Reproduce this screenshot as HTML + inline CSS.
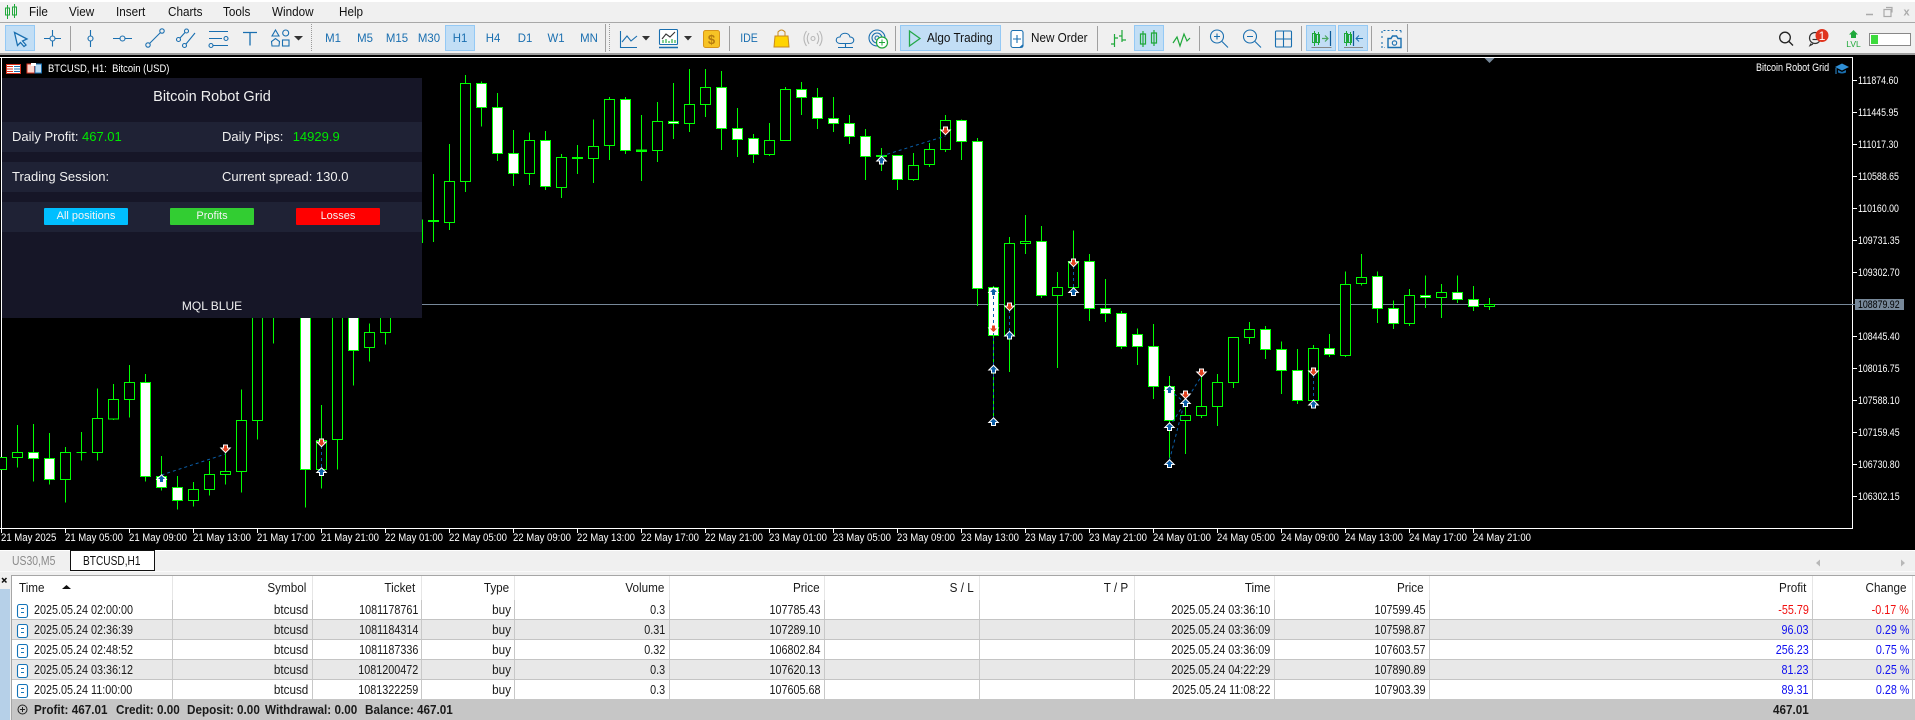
<!DOCTYPE html>
<html><head><meta charset="utf-8"><title>BTCUSD,H1</title>
<style>
html,body{margin:0;padding:0;width:1915px;height:720px;overflow:hidden;background:#f0f0f0}
body{position:relative;font-family:"Liberation Sans",sans-serif;color:#1a1a1a}
svg{position:absolute;left:0;top:0;display:block}
.a{position:absolute}
.t,.n,.rt,.rn,.m,.c,.x,.p{position:absolute;white-space:pre;line-height:20px;font-size:13px}
.t{transform:scaleX(.9);transform-origin:0 50%}
.n{transform:scaleX(.83);transform-origin:0 50%}
.rt{transform:scaleX(.9);transform-origin:100% 50%}
.rn{transform:scaleX(.83);transform-origin:100% 50%}
.m{top:2px;transform:scaleX(.9);transform-origin:0 50%;color:#111}
.c{top:28px;font-size:12px;color:#1a6fb0;transform:translateX(-50%) scaleX(.95)}
.x{font-size:11px;color:#fff;top:527.5px;transform:scaleX(.87);transform-origin:0 50%}
.p{font-size:11px;color:#fff;left:1858px;transform:scaleX(.8);transform-origin:0 50%}
.row{position:absolute;left:0;width:1915px;height:20px;background:#fff}
.row.g{background:#e8e8e8}
.bl{color:#1010f0}.rd{color:#f01010}
.band{position:absolute;left:2px;width:420px;height:30px;background:#1f2235}
.pt{position:absolute;white-space:pre;font-size:13px;line-height:20px;color:#f0f0f0}
.gr{color:#00e800}
.btn{position:absolute;top:208px;width:84px;height:17px;line-height:17px;text-align:center;font-size:11px;color:#f4f4f4;border-radius:1px}
b{font-weight:bold}
.mk{paint-order:stroke;stroke:#fff;stroke-width:2;stroke-linejoin:miter}
</style></head>
<body>

<!-- CHART -->
<svg width="1915" height="552" style="top:0">
<defs>
<g id="u"><path class="mk" d="M0-3.500 3.500 0H1.500V3H-1.500V0H-3.500Z" fill="#0b5ea8"/></g>
<g id="d"><path class="mk" d="M0 3.500 3.500 0H1.500V-3H-1.500V0H-3.500Z" fill="#e2411f"/></g>
</defs>
<rect x="0" y="54" width="1915" height="497" fill="#000"/>
<rect x="0" y="53" width="1915" height="2" fill="#a0a0a0"/>
<path d="M1.500 57V529M0 57.500H1852.500M1852.500 57V529M0 528.500H1853M0 550.500H1915" stroke="#fff" fill="none" shape-rendering="crispEdges"/>
<path d="M2 304.500H1855" stroke="#778899" shape-rendering="crispEdges"/>
<path d="M1484.500 58h10l-5 5z" fill="#778899"/>
<path d="M1853 80.500h4M1853 112.500h4M1853 144.500h4M1853 176.500h4M1853 208.500h4M1853 240.500h4M1853 272.500h4M1853 336.500h4M1853 368.500h4M1853 400.500h4M1853 432.500h4M1853 464.500h4M1853 496.500h4" stroke="#fff" shape-rendering="crispEdges"/>
<path d="M1.500 529v4M65.500 529v4M129.500 529v4M193.500 529v4M257.500 529v4M321.500 529v4M385.500 529v4M449.500 529v4M513.500 529v4M577.500 529v4M641.500 529v4M705.500 529v4M769.500 529v4M833.500 529v4M897.500 529v4M961.500 529v4M1025.500 529v4M1089.500 529v4M1153.500 529v4M1217.500 529v4M1281.500 529v4M1345.500 529v4M1409.500 529v4M1473.500 529v4" stroke="#fff" shape-rendering="crispEdges"/>
<rect x="1855" y="299" width="49" height="11" fill="#778899"/>

<g shape-rendering="crispEdges" stroke="#00ff00" stroke-width="1">
<!-- A -->
<g transform="translate(0,320) scale(1,.33333)">
<path vector-effect="non-scaling-stroke" fill="none" d="M17.500 315V443M33.500 312V485M49.500 339V494M65.500 381V548M81.500 336V422M97.500 205V422M113.500 192V300M129.500 135V293M145.500 162V485M161.500 408V512M177.500 468V569M193.500 486V560M209.500 423V527M225.500 385V494M241.500 208V518M257.500 -300V359M273.500 -100V71M305.500 -100V563M321.500 255V506M337.500 -100V449M353.500 -100V197M369.500 10V125M385.500 -30V74M76.500 397h10"/>
<path vector-effect="non-scaling-stroke" fill="#000" d="M-3.500 412h10v37h-10zM12.500 397h10v15h-10zM60.500 397h10v81h-10zM92.500 295h10v103h-10zM108.500 238h10v59h-10zM124.500 187h10v51h-10zM188.500 508h10v33h-10zM204.500 463h10v45h-10zM220.500 454h10v9h-10zM236.500 301h10v153h-10zM252.500 -300h10v601h-10zM316.500 361h10v88h-10zM332.500 -300h10v658h-10zM364.500 37h10v46h-10zM380.500 -50h10v88h-10z"/>
<path vector-effect="non-scaling-stroke" fill="#fff" d="M28.500 397h10v18h-10zM44.500 415h10v63h-10zM140.500 187h10v282h-10zM156.500 469h10v33h-10zM172.500 502h10v39h-10zM300.500 -300h10v749h-10zM348.500 -100h10v191h-10z"/>
</g>
<!-- B -->
<g transform="translate(0,60) scale(1,.33333)">
<path vector-effect="non-scaling-stroke" fill="none" d="M433.500 342V546M449.500 252V510M465.500 45V396M481.500 64V200M497.500 99V303M513.500 210V378M529.500 217V375M545.500 213V390M561.500 282V414M577.500 255V342M593.500 178V369M609.500 111V300M625.500 111V282M641.500 165V363M657.500 126V306M673.500 69V237M689.500 27V216M705.500 27V171M721.500 33V270M737.500 144V291M753.500 222V309M769.500 189V288M785.500 81V242M801.500 66V165M817.500 84V207M833.500 111V216M849.500 165V252M865.500 207V360M881.500 264V333M897.500 286V390M913.500 279V363M929.500 249V321M945.500 165V276M961.500 178V300M977.500 234V738"/>
<path vector-effect="non-scaling-stroke" fill="#000" d="M412.500 480h10v68h-10zM444.500 364h10v124h-10zM460.500 70h10v295h-10zM524.500 241h10v100h-10zM556.500 292h10v91h-10zM588.500 259h10v37h-10zM604.500 118h10v139h-10zM652.500 184h10v88h-10zM684.500 133h10v58h-10zM700.500 82h10v52h-10zM764.500 241h10v43h-10zM780.500 88h10v154h-10zM908.500 316h10v43h-10zM924.500 268h10v46h-10zM940.500 181h10v88h-10z"/>
<path vector-effect="non-scaling-stroke" fill="#fff" d="M476.500 70h10v73h-10zM492.500 142h10v139h-10zM508.500 280h10v61h-10zM540.500 241h10v139h-10zM620.500 118h10v154h-10zM668.500 184h10v6h-10zM716.500 82h10v124h-10zM732.500 205h10v34h-10zM748.500 235h10v49h-10zM796.500 88h10v25h-10zM812.500 112h10v64h-10zM828.500 175h10v16h-10zM844.500 190h10v40h-10zM860.500 229h10v61h-10zM892.500 286h10v73h-10zM956.500 181h10v64h-10zM972.500 244h10v442h-10z"/>
<path vector-effect="non-scaling-stroke" fill="#00ff00" d="M428.500 481h10v4h-10zM572.500 292h10v4h-10zM636.500 270h10v4h-10zM876.500 286h10v4h-10z"/>
</g>
<!-- C -->
<g transform="translate(0,180) scale(1,.33333)">
<path vector-effect="non-scaling-stroke" fill="none" d="M993.500 318V725M1009.500 171V576M1025.500 105V222M1041.500 138V354M1057.500 276V564M1073.500 151V325M1089.500 222V423M1105.500 297V426M1121.500 393V507M1137.500 445V555M1153.500 432V657M1169.500 588V835M1185.500 670V822M1201.500 590V714M1217.500 582V738M1233.500 472V624M1249.500 426V492M1265.500 438V537M1281.500 484V642M1297.500 507V672M1313.500 495V680M1329.500 462V531M1345.500 274V531M1361.500 222V316M1377.500 274V429M1393.500 361V447M1409.500 327V438M1425.500 286V384M1441.500 312V414M1457.500 286V369M1473.500 318V393M1489.500 354V390"/>
<path vector-effect="non-scaling-stroke" fill="#000" d="M1004.500 190h10v277h-10zM1020.500 184h10v6h-10zM1052.500 322h10v25h-10zM1068.500 244h10v78h-10zM1180.500 706h10v16h-10zM1196.500 679h10v28h-10zM1212.500 607h10v73h-10zM1228.500 472h10v136h-10zM1244.500 448h10v25h-10zM1308.500 505h10v157h-10zM1340.500 313h10v214h-10zM1356.500 292h10v19h-10zM1404.500 346h10v85h-10zM1436.500 337h10v16h-10zM1484.500 373h10v7h-10z"/>
<path vector-effect="non-scaling-stroke" fill="#fff" d="M988.500 322h10v145h-10zM1036.500 184h10v163h-10zM1084.500 244h10v141h-10zM1100.500 385h10v16h-10zM1116.500 400h10v100h-10zM1132.500 463h10v37h-10zM1148.500 499h10v121h-10zM1164.500 619h10v103h-10zM1260.500 448h10v61h-10zM1276.500 508h10v64h-10zM1292.500 571h10v91h-10zM1324.500 505h10v19h-10zM1372.500 289h10v97h-10zM1388.500 385h10v46h-10zM1420.500 346h10v7h-10zM1452.500 337h10v22h-10zM1468.500 358h10v22h-10z"/>
</g>
</g>

<!-- trade lines -->
<g fill="none" stroke="#0b5ea8" stroke-dasharray="3 3">
<path d="M161.500 475 225.500 454"/>
<path d="M321.500 446V468"/>
<path d="M881.500 156 945.500 136"/>
<path d="M993.500 296V325"/>
<path d="M993.500 332V418"/>
<path d="M1009.500 310V332"/>
<path d="M1073.500 266V288"/>
<path d="M1169.500 390 1185.500 403"/>
<path d="M1169.500 427 1201.500 376"/>
<path d="M1169.500 460 1185.500 398"/>
<path d="M1313.500 375V400"/>
</g>
<use href="#u" x="161.500" y="479"/><use href="#d" x="225.500" y="448.500"/><use href="#d" x="321.500" y="442.500"/><use href="#u" x="321.500" y="472"/>
<use href="#u" x="881.500" y="160.500"/><use href="#d" x="945.500" y="130.500"/>
<use href="#u" x="993.500" y="292"/><use href="#d" x="993.500" y="328.500"/><use href="#u" x="993.500" y="369.500"/><use href="#u" x="993.500" y="422"/>
<use href="#d" x="1009.500" y="306.500"/><use href="#u" x="1009.500" y="335.500"/>
<use href="#d" x="1073.500" y="262.500"/><use href="#u" x="1073.500" y="292"/>
<use href="#u" x="1169.500" y="390"/><use href="#u" x="1169.500" y="427"/><use href="#u" x="1169.500" y="464"/>
<use href="#d" x="1185.500" y="394.500"/><use href="#u" x="1185.500" y="403"/>
<use href="#d" x="1201.500" y="372.500"/>
<use href="#d" x="1313.500" y="371.500"/><use href="#u" x="1313.500" y="404.500"/>

<!-- chart title icons -->
<rect x="6.500" y="64.500" width="14" height="9" fill="#fff" stroke="#d9331f"/>
<path d="M7 66.500h6M7 69h6M7 71.500h6" stroke="#d9331f"/><path d="M14 66.500h6M14 69h6M14 71.500h6" stroke="#1a6fb0"/>
<path d="M27 64h6l1.500 1.500V73H27Z" fill="#fdd5cc" stroke="#d9331f"/>
<path d="M35 64h6.500V73H35Z" fill="#bcdcf4" stroke="#1a6fb0"/>
<rect x="31" y="63" width="5" height="3" fill="#fff"/>

<!-- hat icon -->
<path d="M1835 67 1842 63.500 1849 67 1842 70.500Z" fill="#2f8fd6"/>
<path d="M1838 70v2.500q4 2 8 0V70l-4 2z" fill="#1a6fb0"/><path d="M1836 68v6" stroke="#2f8fd6"/>
</svg>

<div class="a" style="left:47.700px;top:58.700px;font-size:11px;line-height:20px;color:#fff;white-space:pre;transform:scaleX(.86);transform-origin:0 50%">BTCUSD, H1:  Bitcoin (USD)</div>
<div class="a" style="left:1755.500px;top:58.300px;font-size:11px;line-height:20px;color:#fff;white-space:pre;transform:scaleX(.82);transform-origin:0 50%">Bitcoin Robot Grid</div>

<!-- axis labels -->
<div class="p" style="top:70.700px">111874.60</div><div class="p" style="top:102.700px">111445.95</div><div class="p" style="top:134.700px">111017.30</div><div class="p" style="top:166.700px">110588.65</div><div class="p" style="top:198.700px">110160.00</div><div class="p" style="top:230.700px">109731.35</div><div class="p" style="top:262.700px">109302.70</div>
<div class="p" style="top:294.700px;color:#000">108879.92</div>
<div class="p" style="top:326.700px">108445.40</div><div class="p" style="top:358.700px">108016.75</div><div class="p" style="top:390.700px">107588.10</div><div class="p" style="top:422.700px">107159.45</div><div class="p" style="top:454.700px">106730.80</div><div class="p" style="top:486.700px">106302.15</div>

<div class="x" style="left:1px">21 May 2025</div><div class="x" style="left:65px">21 May 05:00</div><div class="x" style="left:129px">21 May 09:00</div><div class="x" style="left:193px">21 May 13:00</div><div class="x" style="left:257px">21 May 17:00</div><div class="x" style="left:321px">21 May 21:00</div><div class="x" style="left:385px">22 May 01:00</div><div class="x" style="left:449px">22 May 05:00</div><div class="x" style="left:513px">22 May 09:00</div><div class="x" style="left:577px">22 May 13:00</div><div class="x" style="left:641px">22 May 17:00</div><div class="x" style="left:705px">22 May 21:00</div><div class="x" style="left:769px">23 May 01:00</div><div class="x" style="left:833px">23 May 05:00</div><div class="x" style="left:897px">23 May 09:00</div><div class="x" style="left:961px">23 May 13:00</div><div class="x" style="left:1025px">23 May 17:00</div><div class="x" style="left:1089px">23 May 21:00</div><div class="x" style="left:1153px">24 May 01:00</div><div class="x" style="left:1217px">24 May 05:00</div><div class="x" style="left:1281px">24 May 09:00</div><div class="x" style="left:1345px">24 May 13:00</div><div class="x" style="left:1409px">24 May 17:00</div><div class="x" style="left:1473px">24 May 21:00</div>

<!-- PANEL -->
<div class="a" style="left:2px;top:78px;width:420px;height:240px;background:#161627"></div>
<div class="band" style="top:122px"></div><div class="band" style="top:162px"></div><div class="band" style="top:202px"></div>
<div class="a" style="left:2px;width:420px;top:87px;text-align:center;font-size:14.500px;line-height:20px;color:#f0f0f0">Bitcoin Robot Grid</div>
<div class="pt" style="left:12px;top:127px">Daily Profit:</div><div class="pt gr" style="left:82px;top:127px">467.01</div>
<div class="pt" style="left:222px;top:127px">Daily Pips:</div><div class="pt gr" style="left:292.700px;top:127px">14929.9</div>
<div class="pt" style="left:12px;top:167px">Trading Session:</div>
<div class="pt" style="left:222px;top:167px">Current spread: 130.0</div>
<div class="btn" style="left:44px;background:#00bfff">All positions</div>
<div class="btn" style="left:170px;background:#32cd32">Profits</div>
<div class="btn" style="left:296px;background:#ff0000">Losses</div>
<div class="a" style="left:2px;width:420px;top:296px;text-align:center;font-size:12px;line-height:20px;color:#f0f0f0">MQL BLUE</div>

<!-- MENU + TOOLBAR -->
<div class="a" style="left:0;top:0;width:1915px;height:2px;background:#fff"></div>
<div class="a" style="left:0;top:22px;width:1915px;height:1px;background:#a8a8a8"></div>
<div class="m" style="left:29px">File</div><div class="m" style="left:69px">View</div><div class="m" style="left:116px">Insert</div><div class="m" style="left:167.500px">Charts</div><div class="m" style="left:223px">Tools</div><div class="m" style="left:272px">Window</div><div class="m" style="left:338.500px">Help</div>

<svg width="1915" height="56" style="top:0">
<!-- logo -->
<g fill="none" stroke="#1fa83a"><path d="M7.500 5v14M5.500 8h4v7h-4zM14.500 4v14M12.500 7h4v8h-4z"/></g>
<!-- highlights -->
<g fill="#c2def5" stroke="#94c9f5">
<rect x="5.500" y="25.500" width="29" height="25"/><rect x="445.500" y="25.500" width="29" height="25"/><rect x="900.500" y="25.500" width="100" height="25"/><rect x="1134.500" y="25.500" width="29" height="25"/><rect x="1306.500" y="25.500" width="29" height="25"/><rect x="1338.500" y="25.500" width="29" height="25"/>
</g>
<!-- separators -->
<path d="M70.500 26V51M605.500 24V52M729.500 26V51M895.500 26V51M1097.500 26V51M1199.500 26V51M1301.500 26V51M1371.500 26V51M1407.500 24V52" stroke="#a0a0a0" shape-rendering="crispEdges"/>
<path d="M311.500 24V52M609.500 24V52" stroke="#9a9a9a" stroke-dasharray="1 1" shape-rendering="crispEdges"/>
<g fill="none" stroke="#1a6fb0" stroke-width="1.100">
<path d="M14.500 32.500 27 39 22.500 41 26 45 24 46.500 20.500 42.500 17.500 45.500Z" stroke-width="1.300" fill="#d8ebfa"/>
<path d="M52.500 30V35.500M52.500 41V46.500M44 38.500H49.500M55.500 38.500H61"/><circle cx="52.500" cy="38.500" r="2.500"/>
<path d="M90.500 30V36M90.500 41V47"/><circle cx="90.500" cy="38.500" r="2.500"/>
<path d="M113 38.500H120M125 38.500H132"/><circle cx="122.500" cy="38.500" r="2.500"/>
<path d="M149.500 43.500 160.500 32.500"/><circle cx="148" cy="45" r="2.200"/><circle cx="162" cy="31" r="2.200"/>
<path d="M180 38 185 32.500M186 44 195 33"/><circle cx="178.500" cy="39.500" r="2"/><circle cx="186.500" cy="31" r="2"/><circle cx="184.500" cy="45.500" r="2"/>
<path d="M209 31.500H228M209 38.500H222M213 45.500H228"/><circle cx="226" cy="38.500" r="2"/><circle cx="211" cy="45.500" r="2"/>
<path d="M243 32.500H257M250 32.500V45.500" stroke-width="1.300"/>
<path d="M275.500 30 279 36H272ZM272 46 271.500 41.500 275.500 38.500 279.500 41.500 279 46Z"/><circle cx="285.700" cy="33" r="3"/><rect x="282.500" y="40" width="6.500" height="6"/>
<path d="M620.500 31V47.500H637M622 42 627 36 631 41 637 36"/>
<rect x="659.500" y="29.500" width="18" height="15" rx="1" fill="#fff"/><path d="M659 47.500H678" stroke-width="1.500"/>
<path d="M662 39 666 34 670 37 675 32" stroke="#333"/>
<path d="M663 43V40M666 43V39M669 43V41M672 43V39M675 43V40" stroke="#1fa83a"/>
<path d="M840 43.500C835 43 835 37 840 37 841 32 849 32 850 37 855 37 855 43.500 850 43.500ZM845.500 43.500V47M838 47.500H853"/>
<circle cx="877" cy="38" r="8"/><circle cx="877" cy="38" r="5"/><circle cx="877" cy="38" r="2"/>
<rect x="1011" y="30.500" width="12" height="17" rx="2" fill="#fff"/><path d="M1017 35V43M1013 39H1021"/>
<circle cx="1217" cy="36.500" r="6.500"/><path d="M1222 41.500 1228 47.500M1214 36.500H1220M1217 33.500V39.500"/>
<circle cx="1250" cy="36.500" r="6.500"/><path d="M1255 41.500 1261 47.500M1247 36.500H1253"/>
<rect x="1275.500" y="31" width="16" height="16" rx="1"/><path d="M1275.500 39H1291.500M1283.500 31V47" />
<path d="M1382 33V30.500H1401M1382 36V39M1382 42V47.500H1385M1401 30.500V33" stroke-dasharray="2 2"/>
<path d="M1388 47.500V38.500H1391L1392.500 36H1396.500L1398 38.500H1401V47.500Z" stroke-width="1.400"/><circle cx="1394.500" cy="43" r="2.200"/>
</g>
<path d="M294 36h9l-4.500 4.500ZM642 36h8l-4 4.500ZM684 36h8l-4 4.500Z" fill="#333"/>
<!-- $ -->
<rect x="703.500" y="30.500" width="16" height="17" rx="2" fill="#f7c325" stroke="#d8951a"/>
<text x="711.500" y="44" text-anchor="middle" font-family="Liberation Sans" font-size="13" fill="#b47a10" font-weight="bold">$</text>
<!-- bag -->
<path d="M775 36H788L789 47H774Z" fill="#ffd400" stroke="#c88a20"/><path d="M778 36V32Q781.500 28 785 32V36" fill="none" stroke="#c88a20"/>
<!-- signal -->
<g fill="none" stroke="#b8b8b8" stroke-width="1.100"><circle cx="813" cy="38.500" r="2"/><path d="M809 33Q805.500 38.500 809 44M817 33Q820.500 38.500 817 44M806.500 31Q801.500 38.500 806.500 46M819.500 31Q824.500 38.500 819.500 46"/></g>
<!-- plus badge -->
<circle cx="882" cy="42.500" r="5.500" fill="#fff" stroke="#1fa83a" stroke-width="1.200"/><path d="M882 39.500v6M879 42.500h6" stroke="#1fa83a"/>
<!-- play -->
<path d="M909.500 31 920 38.500 909.500 46Z" fill="none" stroke="#25a84a" stroke-width="1.300"/>
<path d="M1019 47.500 1023 47.500 1023 44Z" fill="#1a6fb0"/>
<!-- bars / candles / line -->
<g fill="none" stroke="#1fa83a" stroke-width="1.200">
<path d="M1114.500 34V47M1111 44H1114.500M1114.500 38H1118M1122 30V42M1119 36H1122M1122 40H1126"/>
<path d="M1143 31V47M1140.500 34h5v10h-5zM1154 30V46M1151.500 33h5v10h-5z" />
<path d="M1173 43 1177 37 1180 46 1184 34 1187 41 1190 38"/>
<g stroke-width="1" shape-rendering="crispEdges">
<path d="M1314.500 31V46M1312.500 33.500h3v9h-3zM1318.500 32V45M1316.500 34.500h3v8h-3z"/>
<path d="M1346.500 31V46M1344.500 33.500h3v9h-3zM1350.500 32V45M1348.500 34.500h3v8h-3z"/>
</g>
<path d="M1322 38.500h6M1325 35.500l3 3-3 3" stroke="#4aa860"/>
</g>
<path d="M1356 38.500h7M1359 35.500l-3 3 3 3" stroke="#1a6fb0" fill="none"/>
<path d="M1330.500 31V46M1353.500 31V46" stroke="#0d5a98" stroke-width="1.200"/>
<path d="M1311.500 47.500H1331.500M1344 47.500H1363" stroke="#888"/>
<!-- right -->
<g fill="none" stroke="#222" stroke-width="1.300"><circle cx="1785" cy="37.500" r="5.300"/><path d="M1789 41.500 1793 45.500"/></g>
<g fill="none" stroke="#333" stroke-width="1.200"><circle cx="1815" cy="38" r="5.500"/><path d="M1811 43.500 1810 45.500 1813 44"/><path d="M1812.500 39.500h5"/></g>
<circle cx="1822" cy="35.500" r="6.500" fill="#e0341e"/>
<text x="1822" y="40" text-anchor="middle" font-family="Liberation Sans" font-size="12" fill="#fff">1</text>
<path d="M1853.500 30 1858 34.500H1856V38H1851V34.500H1849Z" fill="#1fa83a"/>
<text x="1853.500" y="47" text-anchor="middle" font-family="Liberation Sans" font-size="8.500" fill="#1fa83a">LVL</text>
<rect x="1869.500" y="33.500" width="41" height="12" fill="#fff" stroke="#888"/>
<rect x="1871" y="35" width="7" height="9" fill="#3ddb3d"/>
<!-- window -->
<path d="M1866 14.500H1873" stroke="#aaa" stroke-width="1.500"/>
<path d="M1884 9.500h7v7h-7zM1886 7.500h6v5" fill="none" stroke="#aaa" stroke-width="1.200"/>
<text x="1906.500" y="15.500" text-anchor="middle" font-family="Liberation Sans" font-size="11" font-weight="bold" fill="#aaa">x</text>
</svg>

<div class="c" style="left:332.600px">M1</div><div class="c" style="left:364.500px">M5</div><div class="c" style="left:396.700px">M15</div><div class="c" style="left:428.600px">M30</div><div class="c" style="left:460.400px">H1</div><div class="c" style="left:493px">H4</div><div class="c" style="left:524.500px">D1</div><div class="c" style="left:556.300px">W1</div><div class="c" style="left:588.600px">MN</div>
<div class="c" style="left:749.400px;transform:translateX(-50%) scaleX(.88)">IDE</div>
<div class="t" style="left:927px;top:28px;color:#111">Algo Trading</div>
<div class="t" style="left:1030.600px;top:28px;color:#111">New Order</div>

<!-- TABS -->
<div class="a" style="left:0;top:551px;width:1915px;height:20px;background:#f0f0f0"></div>
<div class="a" style="left:0;top:571px;width:1915px;height:1px;background:#fafafa"></div>
<div class="a" style="left:70px;top:550px;width:83px;height:19px;background:#fff;border:1px solid #111"></div>
<div class="t" style="left:12px;top:551px;color:#8a8a8a;transform:scaleX(.8)">US30,M5</div>
<div class="t" style="left:82.700px;top:550.500px;color:#111;transform:scaleX(.78)">BTCUSD,H1</div>

<svg width="1915" height="720" style="top:0;pointer-events:none">
<path d="M1816 563 1820 559.500V566.500ZM1901 559.500 1905 563 1901 566.500Z" fill="#b8b8b8"/>
</svg>

<!-- TABLE -->
<div class="a" style="left:0;top:575px;width:1915px;height:1px;background:#a6a6a6"></div>
<div class="a" style="left:0;top:576px;width:1915px;height:24px;background:#fff"></div>
<div class="t" style="left:19px;top:577.500px">Time</div>
<div class="rt" style="right:1609px;top:577.500px">Symbol</div>
<div class="rt" style="right:1499.500px;top:577.500px">Ticket</div>
<div class="rt" style="right:1406px;top:577.500px">Type</div>
<div class="rt" style="right:1250.500px;top:577.500px">Volume</div>
<div class="rt" style="right:1095.500px;top:577.500px">Price</div>
<div class="rt" style="right:941.500px;top:577.500px">S / L</div>
<div class="rt" style="right:786.400px;top:577.500px">T / P</div>
<div class="rt" style="right:644.400px;top:577.500px">Time</div>
<div class="rt" style="right:491px;top:577.500px">Price</div>
<div class="rt" style="right:108.500px;top:577.500px">Profit</div>
<div class="rt" style="right:8px;top:577.500px">Change</div>

<div class="row" style="top:600px">
<div class="n" style="left:34px">2025.05.24 02:00:00</div><div class="rt" style="right:1606.400px">btcusd</div><div class="rn" style="right:1497px">1081178761</div><div class="rt" style="right:1404.400px">buy</div><div class="rn" style="right:1250px">0.3</div><div class="rn" style="right:1095px">107785.43</div><div class="rn" style="right:644.400px">2025.05.24 03:36:10</div><div class="rn" style="right:489.200px">107599.45</div><div class="rn rd" style="right:106.500px">-55.79</div><div class="rn rd" style="right:6px">-0.17 %</div>
</div>
<div class="row g" style="top:620px">
<div class="n" style="left:34px">2025.05.24 02:36:39</div><div class="rt" style="right:1606.400px">btcusd</div><div class="rn" style="right:1497px">1081184314</div><div class="rt" style="right:1404.400px">buy</div><div class="rn" style="right:1250px">0.31</div><div class="rn" style="right:1095px">107289.10</div><div class="rn" style="right:644.400px">2025.05.24 03:36:09</div><div class="rn" style="right:489.200px">107598.87</div><div class="rn bl" style="right:106.500px">96.03</div><div class="rn bl" style="right:6px">0.29 %</div>
</div>
<div class="row" style="top:640px">
<div class="n" style="left:34px">2025.05.24 02:48:52</div><div class="rt" style="right:1606.400px">btcusd</div><div class="rn" style="right:1497px">1081187336</div><div class="rt" style="right:1404.400px">buy</div><div class="rn" style="right:1250px">0.32</div><div class="rn" style="right:1095px">106802.84</div><div class="rn" style="right:644.400px">2025.05.24 03:36:09</div><div class="rn" style="right:489.200px">107603.57</div><div class="rn bl" style="right:106.500px">256.23</div><div class="rn bl" style="right:6px">0.75 %</div>
</div>
<div class="row g" style="top:660px">
<div class="n" style="left:34px">2025.05.24 03:36:12</div><div class="rt" style="right:1606.400px">btcusd</div><div class="rn" style="right:1497px">1081200472</div><div class="rt" style="right:1404.400px">buy</div><div class="rn" style="right:1250px">0.3</div><div class="rn" style="right:1095px">107620.13</div><div class="rn" style="right:644.400px">2025.05.24 04:22:29</div><div class="rn" style="right:489.200px">107890.89</div><div class="rn bl" style="right:106.500px">81.23</div><div class="rn bl" style="right:6px">0.25 %</div>
</div>
<div class="row" style="top:680px">
<div class="n" style="left:34px">2025.05.24 11:00:00</div><div class="rt" style="right:1606.400px">btcusd</div><div class="rn" style="right:1497px">1081322259</div><div class="rt" style="right:1404.400px">buy</div><div class="rn" style="right:1250px">0.3</div><div class="rn" style="right:1095px">107605.68</div><div class="rn" style="right:644.400px">2025.05.24 11:08:22</div><div class="rn" style="right:489.200px">107903.39</div><div class="rn bl" style="right:106.500px">89.31</div><div class="rn bl" style="right:6px">0.28 %</div>
</div>

<div class="a" style="left:0;top:699px;width:1915px;height:21px;background:#c6c6c6"></div>
<div class="t" style="left:34px;top:699.500px"><b>Profit: 467.01</b></div>
<div class="t" style="left:116px;top:699.500px"><b>Credit: 0.00</b></div>
<div class="t" style="left:186.500px;top:699.500px"><b>Deposit: 0.00</b></div>
<div class="t" style="left:265px;top:699.500px"><b>Withdrawal: 0.00</b></div>
<div class="t" style="left:365px;top:699.500px"><b>Balance: 467.01</b></div>
<div class="rt" style="right:106.500px;top:699.500px"><b>467.01</b></div>

<svg width="1915" height="720" style="top:0">
<path d="M172.500 576V600M312.500 576V600M421.500 576V600M514.500 576V600M669.500 576V600M824.500 576V600M979.500 576V600M1134.500 576V600M1274.500 576V600M1429.500 576V600M1812.500 576V600M1912.500 576V600" stroke="#e6e6e6" shape-rendering="crispEdges"/>
<path d="M172.500 600V699M312.500 600V699M421.500 600V699M514.500 600V699M669.500 600V699M824.500 600V699M979.500 600V699M1134.500 600V699M1274.500 600V699M1429.500 600V699M1812.500 600V699M1912.500 600V699" stroke="#c8c8c8" shape-rendering="crispEdges"/>
<path d="M0 619.500H1915M0 639.500H1915M0 659.500H1915M0 679.500H1915" stroke="#c4c4c4" shape-rendering="crispEdges"/>
<path d="M62 589h9l-4.500-4z" fill="#111"/>
<g fill="#fff" stroke="#1474b8" stroke-width="1.100">
<rect x="17.500" y="604.500" width="10" height="13" rx="2"/><rect x="17.500" y="624.500" width="10" height="13" rx="2"/><rect x="17.500" y="644.500" width="10" height="13" rx="2"/><rect x="17.500" y="664.500" width="10" height="13" rx="2"/><rect x="17.500" y="684.500" width="10" height="13" rx="2"/>
</g>
<path d="M21 608.500h3M21 612.500h3M21 628.500h3M21 632.500h3M21 648.500h3M21 652.500h3M21 668.500h3M21 672.500h3M21 688.500h3M21 692.500h3" stroke="#1474b8"/>
<g fill="none" stroke="#222"><circle cx="22.500" cy="709.500" r="4.500"/><path d="M20 709.500h5M22.500 707v5"/></g>
<rect x="0" y="572" width="12" height="148" fill="#f0f0f0"/>
<rect x="0" y="589" width="10" height="131" fill="#b6d0e8"/>
<path d="M11.500 575V720" stroke="#a6a6a6" shape-rendering="crispEdges"/>
<path d="M2 578 6.500 582.500M6.500 578 2 582.500" stroke="#111" stroke-width="1.500"/>
</svg>
</body></html>
